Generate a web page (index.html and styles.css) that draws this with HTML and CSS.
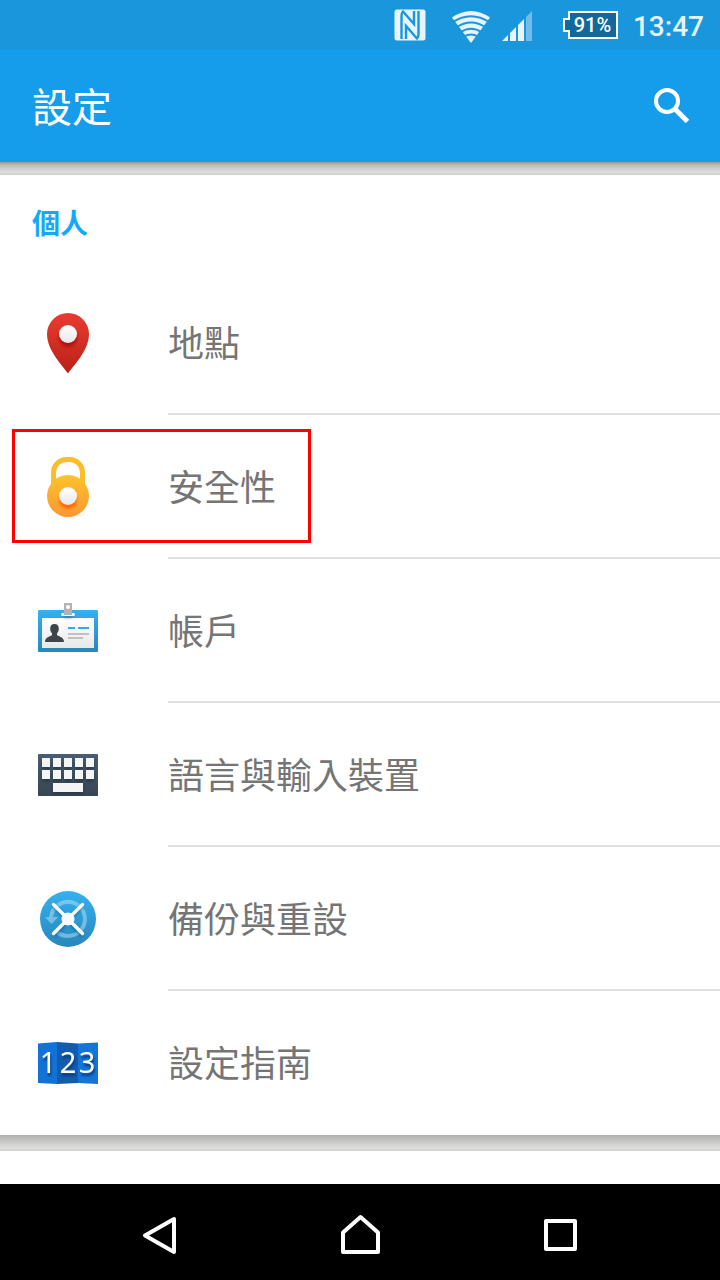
FILE: index.html
```html
<!DOCTYPE html>
<html lang="zh-Hant">
<head>
<meta charset="utf-8">
<meta name="viewport" content="width=device-width, initial-scale=1">
<title>設定</title>
<link rel="stylesheet" href="styles.css">
</head>
<body>
<div class="screen">
  <div class="status-bar">
    <svg class="nfc" width="32" height="32" viewBox="0 0 32 32" aria-hidden="true">
      <rect x="0.500" y="0.500" width="31" height="31" rx="2.500" fill="#e8f4fc"/>
      <path d="M7.500 30V7q0-3 1.500-4.500L20 15V2M24.500 2v23q0 3-1.500 4.500L12 17V30" fill="none" stroke="#1a96dc" stroke-width="2.400"/>
    </svg>
    <svg class="wifi" width="38" height="36" viewBox="0 0 38 36" aria-hidden="true">
      <path d="M0 10.500Q19-2.500 38 10.500L19 36Z" fill="#e8f4fc"/>
      <path d="M0 15.500Q19 3 38 15.500M4 20.500Q19 10.500 34 20.500M8 25.300Q19 18 30 25.300M12 29.600Q19 25.500 26 29.600" fill="none" stroke="#1a96dc" stroke-width="2"/>
    </svg>
    <svg class="signal" width="30" height="32" viewBox="0 0 30 32" aria-hidden="true">
      <path d="M0 32 6 26v6ZM8 32v-8l6-6v14ZM16 32V16l6-6v22Z" fill="#e8f4fc"/>
      <path d="M24 32V8l6-6v30Z" fill="#73bce9"/>
    </svg>
    <div class="battery">
      <svg class="battery-shape" width="55" height="28" viewBox="0 0 55 28" aria-hidden="true">
        <path d="M6 1H54V27H6V20H1V8H6Z" fill="#11689a" stroke="#fff" stroke-width="2"/>
      </svg>
      <span class="battery-text">91%</span>
    </div>
    <time class="clock">13:47</time>
  </div>

  <header class="app-bar">
    <h1 class="title">設定</h1>
    <button class="search" type="button" aria-label="搜尋">
      <svg width="40" height="40" viewBox="0 0 40 40" aria-hidden="true">
        <circle cx="15" cy="15" r="11" fill="none" stroke="#fff" stroke-width="4"/>
        <path d="M23.500 23.500 35.500 35.500" fill="none" stroke="#fff" stroke-width="5"/>
      </svg>
    </button>
  </header>

  <main class="content">
    <section class="card">
      <h2 class="section-title">個人</h2>
      <ul class="list">
        <li class="item"><a class="row" href="#location">
          <svg class="icon" viewBox="0 0 64 64" aria-hidden="true">
            <defs>
              <linearGradient id="red" x2="0" y2="1"><stop stop-color="#e93c31"/><stop offset="1" stop-color="#ba2015"/></linearGradient>
              <linearGradient id="gold" x2="0" y2="1"><stop stop-color="#fcc32b"/><stop offset="1" stop-color="#fb9732"/></linearGradient>
              <linearGradient id="sky" x2="0" y2="1"><stop stop-color="#33b1f0"/><stop offset="1" stop-color="#2886ba"/></linearGradient>
              <linearGradient id="slate" x2="0" y2="1"><stop stop-color="#485e72"/><stop offset="1" stop-color="#384553"/></linearGradient>
              <linearGradient id="pale" x2="0" y2="1"><stop stop-color="#fff"/><stop offset="1" stop-color="#e8e8e8"/></linearGradient>
              <filter id="soft" x="-50%" y="-50%" width="200%" height="200%"><feGaussianBlur stdDeviation="1.500"/></filter>
            </defs>
            <path d="M32 62.500C28 56 11 40 11 23a21 21 0 0 1 42 0C53 40 36 56 32 62.500Z" fill="url(#red)"/>
            <circle cx="32" cy="27" r="9" fill="#a80d0d" opacity=".8" filter="url(#soft)"/>
            <circle cx="32" cy="23" r="9" fill="url(#pale)"/>
          </svg>
          <span class="label">地點</span>
        </a></li>
        <li class="item marked"><a class="row" href="#security">
          <svg class="icon" viewBox="0 0 64 64" aria-hidden="true">
            <path d="M17.500 32V17.500a13 13 0 0 1 13-13h3a13 13 0 0 1 13 13V32" fill="none" stroke="#fcbc2c" stroke-width="5"/>
            <circle cx="32" cy="41" r="21" fill="url(#gold)"/>
            <circle cx="32" cy="45" r="9" fill="#ff5a00" opacity=".8" filter="url(#soft)"/>
            <circle cx="32" cy="41" r="9" fill="url(#pale)"/>
          </svg>
          <span class="label">安全性</span>
        </a></li>
        <li class="item"><a class="row" href="#accounts">
          <svg class="icon" viewBox="0 0 64 64" aria-hidden="true">
            <rect x="2" y="11" width="60" height="42" rx="1" fill="url(#sky)"/>
            <rect x="6" y="19" width="52" height="30" fill="url(#pale)"/>
            <ellipse cx="32" cy="17" rx="6" ry="2" fill="#1470a8" opacity=".6" filter="url(#soft)"/>
            <rect x="25" y="14" width="14" height="3" rx="1.500" fill="#fff"/>
            <path d="M28 4h8v12h-8Z" fill="#b3b3b3"/><circle cx="32" cy="8" r="2" fill="#fff"/>
            <path d="M18.500 25c3 0 4.300 2 4.300 4.500 0 2.300-.8 3.800-1.800 4.800v2c3 1.700 7 2 7 6.700H9c0-4.700 4-5 7-6.700v-2c-1-1-1.800-2.500-1.800-4.800 0-2.500 1.300-4.500 4.300-4.500Z" fill="#3d464d"/>
            <path d="M32 28h7v2h-7ZM42 28h11v2H42Z" fill="#35ace8"/>
            <path d="M32 34h21v2H32ZM32 38h15v2H32Z" fill="#c0c1c1"/>
          </svg>
          <span class="label">帳戶</span>
        </a></li>
        <li class="item"><a class="row" href="#language">
          <svg class="icon" viewBox="0 0 64 64" aria-hidden="true">
            <rect x="2" y="11" width="60" height="42" rx="1" fill="url(#slate)"/>
            <path d="M6 18h8v9H6ZM17 18h8v9h-8ZM28 18h8v9h-8ZM39 18h8v9h-8ZM50 18h8v9h-8ZM6 30h8v9H6ZM17 30h8v9h-8ZM28 30h8v9h-8ZM39 30h8v9h-8ZM50 30h8v9h-8ZM17 42h30v9H17Z" fill="#1f2d3a" opacity=".6" filter="url(#soft)"/>
            <path d="M6 15h8v9H6ZM17 15h8v9h-8ZM28 15h8v9h-8ZM39 15h8v9h-8ZM50 15h8v9h-8ZM6 27h8v9H6ZM17 27h8v9h-8ZM28 27h8v9h-8ZM39 27h8v9h-8ZM50 27h8v9h-8ZM17 40h30v9H17Z" fill="#f5f5f6"/>
          </svg>
          <span class="label">語言與輸入裝置</span>
        </a></li>
        <li class="item"><a class="row" href="#backup">
          <svg class="icon" viewBox="0 0 64 64" aria-hidden="true">
            <circle cx="32" cy="32" r="28" fill="url(#sky)"/>
            <g opacity=".45">
              <path d="M15 31A17 17 0 1 1 20 44" fill="none" stroke="#cbe9fa" stroke-width="4"/>
              <path d="M9 30h13l-6.500 7Z" fill="#cbe9fa"/>
            </g>
            <path d="m18 19 29 30M46 19 18 49" stroke="#105f90" stroke-width="4" opacity=".6" filter="url(#soft)"/>
            <path d="m17.500 17.500 29 29M46.500 17.500l-29 29" stroke="#f8fafb" stroke-width="3.500" stroke-linecap="round"/>
            <circle cx="32" cy="32" r="6.500" fill="#f8fafb"/>
          </svg>
          <span class="label">備份與重設</span>
        </a></li>
        <li class="item"><a class="row" href="#guide">
          <svg class="icon" viewBox="0 0 64 64" aria-hidden="true">
            <path d="M2 12.500 21 11V53L2 52Z" fill="#1272d8"/>
            <path d="M21 11 42 12.500V52L21 53Z" fill="#125cb0"/>
            <path d="M42 12.500 62 11.500V53L42 52Z" fill="#1474dc"/>
            <g class="digits"><text x="12" y="42">1</text><text x="32" y="42">2</text><text x="51" y="42">3</text></g>
          </svg>
          <span class="label">設定指南</span>
        </a></li>
      </ul>
    </section>
    <section class="card next-card"></section>
  </main>

  <nav class="nav-bar">
    <button class="nav-button" type="button" aria-label="返回">
      <svg width="48" height="48" viewBox="0 0 48 48"><path d="M9 27.500 38 11V44Z"/></svg>
    </button>
    <button class="nav-button" type="button" aria-label="主畫面">
      <svg width="48" height="48" viewBox="0 0 48 48"><path d="M7 44V24.500L24.500 9 42 24.500V44Z"/></svg>
    </button>
    <button class="nav-button" type="button" aria-label="最近使用">
      <svg width="48" height="48" viewBox="0 0 48 48"><path d="M10 13H39V41H10Z"/></svg>
    </button>
  </nav>
</div>
</body>
</html>
```
FILE: styles.css
```css
*,
*::before,
*::after {
  box-sizing: border-box;
}

body {
  margin: 0;
  font-family: Roboto, "Noto Sans CJK TC", sans-serif;
}

button {
  padding: 0;
  border: 0;
  background: none;
}

svg {
  display: block;
}

.screen {
  display: flex;
  flex-direction: column;
  min-height: 100vh;
  background: #dededc;
}

.status-bar {
  display: flex;
  align-items: center;
  justify-content: flex-end;
  height: 50px;
  padding-right: 16px;
  background: #1a96dc;
}

.nfc {
  margin-right: 26px;
}

.wifi {
  margin-right: 12px;
}

.signal {
  margin-right: 31px;
}

.battery {
  position: relative;
  display: flex;
  align-items: center;
  justify-content: center;
  width: 55px;
  height: 28px;
  margin-right: 15px;
  padding-left: 4px;
}

.battery-shape {
  position: absolute;
  inset: 0;
}

.battery-text {
  position: relative;
  font-size: 20px;
  font-weight: 500;
  line-height: 28px;
  color: #fff;
}

.clock {
  padding-top: 4px;
  font-size: 28px;
  font-weight: 500;
  line-height: 46px;
  color: #e8f4fc;
}

.app-bar {
  display: flex;
  align-items: center;
  justify-content: space-between;
  height: 112px;
  padding: 0 28px 0 32px;
  background: #159dec;
}

.title {
  margin: 0;
  padding-top: 6px;
  font-size: 40px;
  font-weight: 400;
  line-height: 56px;
  color: #fff;
}

.content {
  display: flex;
  flex: 1;
  flex-direction: column;
  gap: 16px;
  padding-top: 13px;
  background: linear-gradient(#999 0, #bcbcba 3px, #dededc 10px, #cfcfcc 13px, #dededc 14px);
}

.card {
  position: relative;
  background: #fff;
}

.card:first-child::after {
  content: "";
  position: absolute;
  top: 100%;
  right: 0;
  left: 0;
  height: 16px;
  background: linear-gradient(#b0b0ae, #dededc 13px, #cececb);
}

.next-card {
  flex: 1;
  min-height: 33px;
}

.section-title {
  margin: 0;
  padding: 30px 32px 26px;
  font-size: 28px;
  font-weight: 700;
  line-height: 40px;
  color: #14a8fb;
}

.list {
  margin: 0;
  padding: 0;
  list-style: none;
}

.item {
  position: relative;
}

.row {
  display: flex;
  align-items: stretch;
  gap: 68px;
  min-height: 144px;
  padding-left: 36px;
  color: #757575;
  text-decoration: none;
}

.icon {
  flex: none;
  align-self: center;
  width: 64px;
  height: 64px;
}

.label {
  display: flex;
  flex: 1;
  align-items: center;
  padding-top: 5px;
  border-bottom: 2px solid #e0e0e0;
  font-size: 36px;
  line-height: 52px;
}

.item:last-child .label {
  border-bottom-color: transparent;
}

.marked::after {
  content: "";
  position: absolute;
  top: 14px;
  left: 12px;
  width: 299px;
  height: 114px;
  border: 3px solid #f00;
  pointer-events: none;
}

.digits {
  font-family: "Noto Sans", sans-serif;
  font-size: 29px;
  text-anchor: middle;
  fill: #fff;
  filter: drop-shadow(1px 3px 1px #083c80);
}

.nav-bar {
  display: flex;
  height: 96px;
  padding: 0 60px;
  background: #000;
}

.nav-button {
  display: flex;
  flex: 1;
  align-items: center;
  justify-content: center;
  fill: none;
  stroke: #fff;
  stroke-width: 4px;
  stroke-linejoin: round;
}
```
